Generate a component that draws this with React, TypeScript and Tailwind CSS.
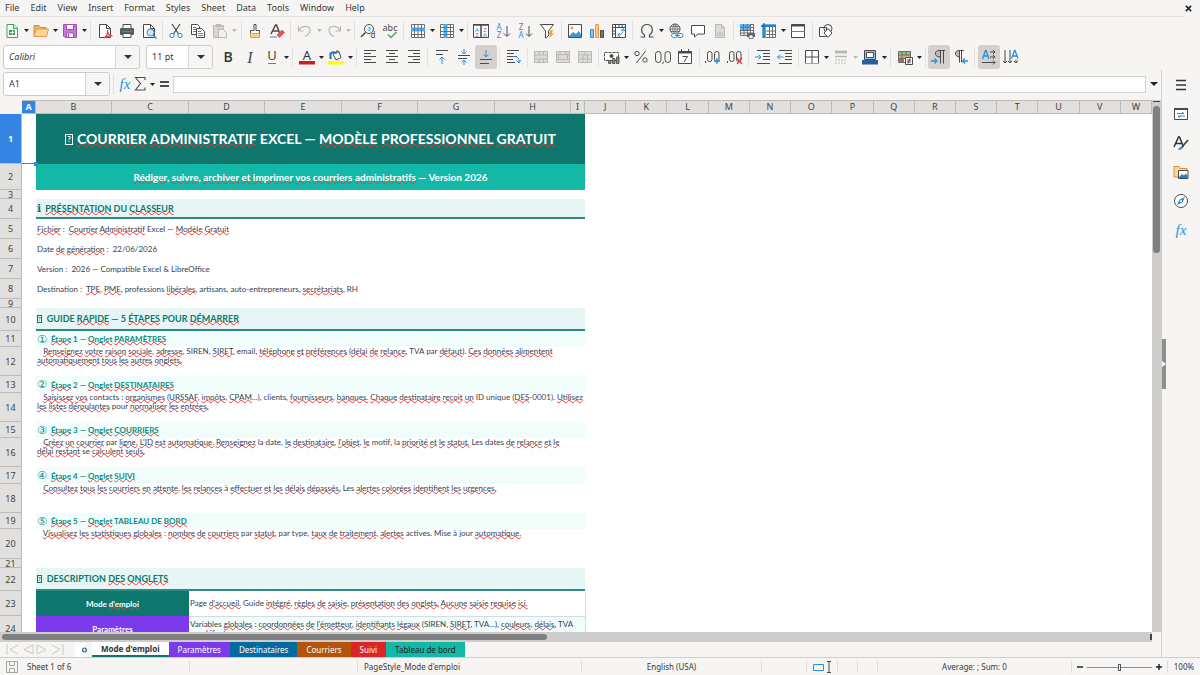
import { Fragment, ReactNode } from 'react';

const INK = '#4a4a48';
const BLUE = '#2a8fd4';
const PURPLE = '#a54fbd';
const ORANGE = '#ee9a3a';
const MUTED = '#b9b8b6';

const lines = (d: string, stroke = INK, width = 1) => (
  <path d={d} stroke={stroke} strokeWidth={width} fill="none" />
);

const letter = (x: number, y: number, text: string, fill = INK, size = 8) => (
  <text x={x} y={y} fontSize={size} fill={fill} fontFamily="Noto Sans" textAnchor="middle">
    {text}
  </text>
);

const icons: Record<string, ReactNode> = {
  New: (
    <>
      <path d="M3 1.500h7l3.500 3.500V14.500H3z" fill="#fff" stroke="#3fa35b" />
      <path d="M9.500 1.500v4h4" fill="#dff3e4" stroke="#3fa35b" />
      <path d="M5 7h6v5H5z" fill="#3fa35b" />
      {lines('M6 9.500h4M8.500 7.500v4', '#fff')}
    </>
  ),
  Open: (
    <>
      <path d="M1 13V2.500h5l1.500 2H13V6" fill="#f3b25c" stroke="#d98e36" />
      <path d="M1 13.500 3 6h12.500l-2 7.500z" fill="#fbd59b" stroke="#e29a45" />
    </>
  ),
  Save: (
    <>
      <path d="M1.500 1.500h13v13H3l-1.500-1.500z" fill="#c07bd4" stroke={PURPLE} />
      <path d="M4.500 1.500h7v5h-7z" fill="#fff" stroke={PURPLE} />
      <path d="M4.500 10h7v4.500h-7z" fill="#fff" stroke={PURPLE} />
      {lines('M6.500 11v3', PURPLE, 1.5)}
    </>
  ),
  'Export as PDF': (
    <>
      <path d="M2.500 1.500h7l4 4V14.500h-11z" fill="#fff" stroke={INK} />
      {lines('M9.500 1.500v4h4')}
      {lines('M7 15c3-2 4-5 3.500-8 0 4 2 5.500 5 6-3-.5-6 .5-8.500 2z', '#dc4550', 1.2)}
    </>
  ),
  Print: (
    <>
      <path d="M4 1.500h8v4H4z" fill="#fff" stroke={INK} />
      <rect x="1" y="5" width="14" height="7" rx="1" fill="#5b5b59" />
      {lines('M3 8.500h10', BLUE, 1.5)}
      <path d="M4 10.500h8v4H4z" fill="#fff" stroke={INK} />
    </>
  ),
  'Print Preview': (
    <>
      <path d="M2.500 1.500h7l4 4V14.500h-11z" fill="#fff" stroke={INK} />
      {lines('M9.500 1.500v4h4')}
      <circle cx="9.500" cy="9.500" r="3.500" fill="#cfe7f8" stroke={BLUE} />
      {lines('m12 12 3.500 3.500', BLUE, 1.5)}
    </>
  ),
  Cut: (
    <>
      {lines('M4 1l6.500 10M12 1 5.500 11', INK, 1.2)}
      <circle cx="4" cy="12.500" r="2.200" fill="none" stroke={BLUE} />
      <circle cx="12" cy="12.500" r="2.200" fill="none" stroke={BLUE} />
    </>
  ),
  Copy: (
    <>
      <path d="M1.500 1.500h6l2 2v8h-8z" fill="#fff" stroke={INK} />
      {lines('M3 4.500h3M3 6.500h4M3 8.500h4', BLUE)}
      <path d="M6.500 5.500h5l3 3v6h-8z" fill="#fff" stroke={INK} />
      {lines('M8 8.500h3M8 10.500h5M8 12.500h5', BLUE)}
    </>
  ),
  Paste: (
    <>
      <path d="M1.500 2.500h10v12h-10z" fill="#d6d5d3" stroke={MUTED} />
      <path d="M4 1h5v3H4z" fill={MUTED} />
      <path d="M6.500 6.500h5l3 3v5h-8z" fill="#f1f0ef" stroke={MUTED} />
    </>
  ),
  'Clone Formatting': (
    <>
      <path d="M7 1.500h2v6h3.500v3h-9v-3H7z" fill="#fff" stroke={INK} />
      <path d="M3.500 10.500h9v4h-9z" fill="#fbd08f" stroke={ORANGE} />
    </>
  ),
  'Clear Direct Formatting': (
    <>
      {lines('M2 11 6.500 2h1L11 11M4 8h6', INK, 1.5)}
      {lines('M1 14h7', BLUE)}
      <path d="m8 12 5-5 2.500 2.500-5 5z" fill="#ef5350" stroke="#d23b3b" strokeWidth=".6" />
    </>
  ),
  Undo: lines('M1.500 3v5h5M2 7.500C5 1.500 13.500 2.500 13 7.500c0 3-3 5-5 6', MUTED, 1.2),
  Redo: lines('M14.500 3v5h-5M14 7.500C11 1.500 2.500 2.500 3 7.500c0 3 3 5 5 6', MUTED, 1.2),
  'Find and Replace': (
    <>
      <circle cx="9" cy="6" r="4.500" fill="#fff" stroke={INK} />
      {lines('M5.500 9.500 1 14', INK, 1.6)}
      {letter(9, 8, 'a', BLUE, 7)}
      {letter(13, 15, 'd', INK, 8)}
    </>
  ),
  Spelling: (
    <>
      {letter(8, 8, 'abc', INK, 9)}
      {lines('m6 11.500 3 3 5.500-5.500', '#43a867', 1.5)}
    </>
  ),
  Row: (
    <>
      <path d="M1.500 1.500h13v13h-13z" fill="#fff" />
      {lines('M1.500 1.500h13v13h-13zM1.500 11.500h13M4.500 1.500v13M8 1.500v13M11.500 1.500v13', '#6d6d6b')}
      <path d="M1 4.500h14v4H1z" fill="#57a9e4" />
      {lines('M4.500 5v3M8 5v3M11.500 5v3', '#2e7fbd')}
    </>
  ),
  Column: (
    <>
      <path d="M1.500 1.500h13v13h-13z" fill="#fff" />
      {lines('M1.500 1.500h13v13h-13zM1.500 4.500h13M1.500 8.500h13M1.500 11.500h13M11.500 1.500v13', '#6d6d6b')}
      <path d="M4.500 1h4v14h-4z" fill="#57a9e4" />
      {lines('M5 4.500h3M5 8.500h3M5 11.500h3', '#2e7fbd')}
    </>
  ),
  Sort: (
    <>
      <path d="M.500 1.500h15v13H.500z" fill="#fff" stroke={INK} />
      {lines('M0 2h16M8 2v13', INK, 1.5)}
      {letter(4, 8.5, 'A', BLUE, 6)}
      {letter(4, 13.5, 'Z', PURPLE, 6)}
      {letter(12, 8.5, 'Z', PURPLE, 6)}
      {letter(12, 13.5, 'A', BLUE, 6)}
    </>
  ),
  'Sort Ascending': (
    <>
      {letter(4, 7, 'A', BLUE, 8)}
      {letter(4, 15, 'Z', PURPLE, 8)}
      {lines('M12 3v10M9 10.500l3 3 3-3')}
    </>
  ),
  'Sort Descending': (
    <>
      {letter(4, 7, 'Z', PURPLE, 8)}
      {letter(4, 15, 'A', BLUE, 8)}
      {lines('M12 3v10M9 10.500l3 3 3-3')}
    </>
  ),
  AutoFilter: (
    <>
      <path d="M1.500 1.500h13L9.500 8v5l-3 2V8z" fill="#fff" stroke={INK} />
      <path d="m12 7-3 4.500h2.500L10 15.500l5-5h-2.500L14 7z" fill={ORANGE} />
    </>
  ),
  Image: (
    <>
      <path d="M1.500 1.500h13v13h-13z" fill="#fff" stroke={INK} />
      <path d="m2 13 4-4 3 2 2.500-3L14 11v3H2z" fill="#3f97d6" />
      <circle cx="5" cy="5" r="1.500" fill={ORANGE} />
    </>
  ),
  Chart: (
    <>
      <path d="M1.500 6.500h3v8h-3z" fill="#8ac4ee" stroke={BLUE} />
      <path d="M6.500 1.500h3v13h-3z" fill="#fbc785" stroke={ORANGE} />
      <path d="M11.500 7.500h3v7h-3z" fill="#777" stroke={INK} />
    </>
  ),
  'Pivot Table': (
    <>
      <path d="M1.500 1.500h13v13h-13z" fill="#fff" stroke={INK} />
      {lines('M1.500 4.500h13M4.500 1.500v13M8 2v2M11 2v2M2 8h2M2 11h2')}
      {lines('M7 12c4 0 5-2 5-6M10 8l2-2.500L14 8M9 10l-2.500 2L9 14', BLUE)}
    </>
  ),
  'Special Character': lines('M1.500 14h4v-2C1 9 2 1.500 8 1.500S15 9 10.500 12v2h4', INK, 1.2),
  Hyperlink: (
    <>
      <circle cx="7" cy="6" r="5" fill="#fff" stroke={INK} />
      {lines('M2 6h10M3 3.500h8M3 8.500h8M7 1v10M7 1C4 4 4 8 7 11M7 1c3 3 3 7 0 10', '#777775')}
      <rect x="3.500" y="10.500" width="6" height="4" rx="2" fill="#fff" stroke={BLUE} />
      <rect x="9" y="10.500" width="6" height="4" rx="2" fill="#fff" stroke={BLUE} />
      {lines('M7 12.500h5', BLUE)}
    </>
  ),
  Comment: <path d="M1.500 2.500h13v8.500H8l-3.500 3v-3h-3z" fill="#fff" stroke={INK} />,
  'Headers and Footers': (
    <path d="M3.500 1.500h6l3 3v10h-9zM9.500 1.500v3h3M5 10h6M5 12h6" fill="#dcdbd9" stroke={MUTED} />
  ),
  'Print Area': (
    <>
      <path d="M1.500 1.500h13v11h-13z" fill="#fff" />
      {lines('M1.500 1.500h13v11h-13zM1.500 4.500h13M1.500 7.500h13M1.500 10h13M5 1.500v11M8.500 1.500v11M11.500 1.500v11', '#6d6d6b')}
      <path d="M1 1h10v6H1z" fill="#63b0e8" />
      {lines('M1 4h10M4.500 1v6M8 1v6', '#2e7fbd')}
      <path d="M8 10h8v4H8z" fill="#4e6f86" />
      <path d="M10 12h4v3.500h-4z" fill="#fff" stroke={INK} strokeWidth=".7" />
    </>
  ),
  Freeze: (
    <>
      <path d="M1.500 1.500h13v13h-13z" fill="#fff" />
      {lines('M1.500 1.500h13v13h-13zM1.500 8h13M1.500 11.500h13M8.500 1.500v13M11.500 1.500v13', '#6d6d6b')}
      <path d="M1 1h4v14H1zM1 1h14v3H1z" fill="#63b0e8" />
      {lines('M3 0v15M0 3h15', '#1b6fae', 1.3)}
    </>
  ),
  'Split Window': (
    <>
      <path d="M1.500 1.500h13v13h-13z" fill="#fff" stroke={INK} />
      {lines('M1 2.500h14', INK, 2)}
      {lines('M1 8.500h14', BLUE)}
    </>
  ),
  'Show Draw Functions': (
    <>
      <path d="M1.500 4.500h7v9h-7z" fill="none" stroke={INK} />
      <circle cx="10" cy="5.500" r="4" fill="none" stroke={INK} />
      <path d="m10 5.500 4 4.500-4 4.500L6 10z" fill="#fff" stroke={INK} />
    </>
  ),
  Italic: (
    <text x="8" y="14" fontSize="16" fontStyle="italic" fontFamily="Liberation Serif" fill={INK} textAnchor="middle">
      I
    </text>
  ),
  Bold: (
    <text x="8" y="13" fontSize="14" fontWeight="600" fontFamily="Open Sans" fill="#333" textAnchor="middle">
      B
    </text>
  ),
  Underline: (
    <>
      {letter(8, 11, 'U', INK, 13)}
      {lines('M4 14.500h8', BLUE)}
    </>
  ),
  'Font Color': (
    <>
      {letter(8, 11, 'A', '#333', 13)}
      <path d="M0 12h16v3.500H0z" fill="#c9211e" />
    </>
  ),
  Highlighting: (
    <>
      <path d="m5 5 6-2.500 2 6L8 11z" fill="#fff" stroke={INK} />
      {lines('M2.500 10V4.500C4 3 5 3 7 3.500', '#1b78b8', 2)}
      {lines('M8 5V2.500c1-1.500 2.500-1 2.500 1')}
      <path d="M0 12h16v3.500H0z" fill="#ffff00" />
    </>
  ),
  'Align Left': lines('M2 1.500h12M2 4.500h7M2 7.500h12M2 10.500h7M2 13.500h12'),
  'Center Horizontally': lines('M2 1.500h12M5 4.500h6M2 7.500h12M5 10.500h6M2 13.500h12'),
  'Align Right': lines('M2 1.500h12M7 4.500h7M2 7.500h12M7 10.500h7M2 13.500h12'),
  'Align Top': (
    <>
      {lines('M2 1.500h12M2 5.500h7')}
      {lines('M8 15V8M5.500 10.500 8 8l2.500 2.500', BLUE)}
    </>
  ),
  'Center Vertically': (
    <>
      {lines('M2 6.500h12M2 9.500h9')}
      {lines('M8 0v5M5.500 2.500 8 5l2.500-2.500M8 16v-5M5.500 13.500 8 11l2.500 2.500', BLUE)}
    </>
  ),
  'Align Bottom': (
    <>
      {lines('M2 10.500h12M2 14.500h9')}
      {lines('M8 1v7M5.500 5.500 8 8l2.500-2.500', BLUE)}
    </>
  ),
  'Wrap Text': (
    <>
      {lines('M2 1.500h12M2 4.500h7M2 7.500h10M2 10.500h6M2 13.500h8')}
      {lines('M8 7.500c5 0 6 1 6 6M11.500 11.500l2.500 2.500 1.500-3', BLUE)}
    </>
  ),
  'Merge and Center Cells': (
    <path d="M1.500 2.500h13v11h-13zM1.500 6h13v4h-13zM6 2.500V6M10.500 2.500V6M6 10v3.500M10.500 10v3.500" fill="#dddcda" stroke={MUTED} />
  ),
  'Merge Cells': (
    <path d="M1.500 2.500h13v11h-13zM1.500 5.500h13M1.500 10.500h13M5 2.500v3M11 2.500v3M3.500 5.500h9v5h-9z" fill="#dddcda" stroke={MUTED} />
  ),
  'Unmerge Cells': (
    <path d="M1.500 2.500h13v11h-13zM1.500 6h13M6 6v7.500M10.500 6v7.500M1.500 10h13M8 2.500V6" fill="#dddcda" stroke={MUTED} />
  ),
  'Format as Currency': (
    <>
      <path d="M.500 3.500h14v8H.500z" fill="#fff" stroke={INK} strokeDasharray="3 1" />
      <circle cx="7.500" cy="7" r="2" fill={INK} />
      <path d="M4.500 11.500h2.500v3H4.500zM8.500 9.500H11v5H8.500zM12.500 8H15v6.500h-2.500z" fill="#8b8b89" stroke={INK} strokeWidth=".8" />
    </>
  ),
  'Format as Percent': (
    <>
      <circle cx="4" cy="4.500" r="2.200" fill="none" stroke={INK} />
      <circle cx="12" cy="11" r="2.200" fill="none" stroke={INK} />
      {lines('M12.500 2 3.500 14')}
    </>
  ),
  'Format as Number': (
    <>
      <rect x=".500" y="2.500" width="5.500" height="11" rx="2.700" fill="none" stroke={INK} />
      <rect x="10" y="2.500" width="5.500" height="11" rx="2.700" fill="none" stroke={INK} />
      {lines('M8.500 12.500 7.500 15')}
    </>
  ),
  'Format as Date': (
    <>
      <path d="M1.500 2.500h13v12h-13z" fill="#fff" stroke={INK} />
      {lines('M1.500 3.500h13', INK, 2)}
      {lines('M4.500 0v4M11.500 0v4M5.500 7.500h5L7 13')}
    </>
  ),
  'Add Decimal Place': (
    <>
      <rect x="2.500" y="2.500" width="4.500" height="10" rx="2.200" fill="none" stroke={INK} />
      <rect x="9.500" y="2.500" width="4.500" height="10" rx="2.200" fill="none" stroke={INK} />
      {lines('M.500 12v2')}
      {lines('M12 9v6M9 12h6', BLUE, 1.3)}
    </>
  ),
  'Delete Decimal Place': (
    <>
      <rect x="2.500" y="2.500" width="4.500" height="10" rx="2.200" fill="none" stroke={INK} />
      <rect x="9.500" y="2.500" width="4.500" height="10" rx="2.200" fill="none" stroke={INK} />
      {lines('M.500 12v2')}
      {lines('m10 9 5 6M15 9l-5 6', '#e0403f', 1.3)}
    </>
  ),
  'Increase Indent': (
    <>
      {lines('M2 1.500h13M8 4.500h7M8 7.500h7M8 10.500h7M2 14.500h13')}
      {lines('M0 8h6M3.500 5.500 6 8l-2.500 2.500', BLUE)}
    </>
  ),
  'Decrease Indent': (
    <>
      {lines('M2 1.500h13M8 4.500h7M8 7.500h7M8 10.500h7M2 14.500h13')}
      {lines('M6.500 8H.500M3 5.500.500 8 3 10.500', BLUE)}
    </>
  ),
  Borders: (
    <>
      <path d="M1.500 1.500h13v13h-13z" fill="#fff" />
      {lines('M14.500 1.500h-13v13M8 1.500v13M1.500 8h13M14.500 1.500v13')}
      {lines('M1.500 14.500h13', ORANGE)}
    </>
  ),
  'Border Style': (
    <>
      {lines('M2 3h12', MUTED, 3)}
      {lines('M2 7.500h12', MUTED, 1.5)}
      <path d="M2 11h12M2 14h12" stroke={MUTED} strokeDasharray="2 1" />
    </>
  ),
  'Border Color': (
    <>
      <path d="M2.500 1.500h11v9h-11z" fill="#8dc3ea" stroke={INK} />
      <path d="M4.500 3.500h7v5h-7z" fill="#fff" stroke={INK} />
      <path d="M0 11h16v4.500H0z" fill="#2a6099" />
    </>
  ),
  'Conditional Formatting': (
    <>
      <path d="M1.500 2.500h12v11h-12z" fill="#fff" />
      <path d="M2 3h11v3H2z" fill="#7ecb8c" />
      <path d="M2 6h11v3H2z" fill="#f3a06a" />
      <path d="M2 9h5v4H2z" fill="#e5565a" />
      {lines('M1.500 2.500h12v11h-12zM1.500 6h12M1.500 9.500h12M5 2.500v11M9 2.500v4', '#6d6d6b')}
      <path d="M8.500 8.500h7v7h-7z" fill="#fff" stroke={INK} />
      {lines('M10 11h4M10 13h4M13 9.500l-2 5')}
    </>
  ),
  'Left-To-Right': (
    <>
      <path d="M9 1.500C3 1.500 3 8 9 8z" fill="#bdbbb8" />
      {lines('M14 1.500H8C3 1.500 3 8 9 8M9.500 1.500v13M12.500 1.500v13')}
      {lines('M0 12h6M3.500 9.500 6 12l-2.500 2.500', BLUE, 1.3)}
    </>
  ),
  'Right-To-Left': (
    <>
      <path d="M7 1.500C1 1.500 1 8 7 8z" fill="#bdbbb8" />
      {lines('M11 1.500H6C1 1.500 1 8 7 8M6.500 1.500v12M8.500 1.500v12')}
      {lines('M15 12H9.500M12 9.500 9.500 12l2.500 2.500', BLUE, 1.3)}
    </>
  ),
  'Text direction from left to right': (
    <>
      {lines('M1.500 10 4.500 1.500h.500L8 10M2.500 7h5', BLUE, 1.3)}
      {lines('M9 3h5M12 1l2 2-2 2M9 8h5M12 6l2 2-2 2M1 13.500h13M12 11.500l2 2-2 2')}
    </>
  ),
  'Text direction from top to bottom': (
    <>
      {lines('M8.500 9.500 11.500 1.500h.500L15 9.500M9.500 7h5', BLUE, 1.3)}
      {lines('M2 1v13M0 12l2 2 2-2M7 1v13M5 12l2 2 2-2M13 10.500v3.500M11 12l2 2 2-2')}
    </>
  ),
  'Function Wizard': (
    <text x="8" y="13" fontSize="15" fontStyle="italic" fontFamily="Liberation Serif" fill={BLUE} textAnchor="middle">
      fx
    </text>
  ),
  'Select Function': lines('M12 4V1.500H2.500l5 6-5 6.500H12v-2.500', INK, 1.1),
  Formula: lines('M5 6h9M5 10h9', INK, 1.8),
  Settings: lines('M3 3.500h10M3 8h10M3 12.500h10', '#333', 1.6),
  Properties: (
    <>
      <path d="M1.500 2.500h13v11h-13z" fill="#fff" stroke={INK} />
      {lines('M1 3h14', INK, 2)}
      {lines('M4 7.500h7l-2-1.500M12 10H5l2 1.500', BLUE)}
    </>
  ),
  Styles: (
    <>
      {lines('M1 12 5.500 2h1L10.500 12M3 8.500h6', '#333', 1.5)}
      {lines('m15 5-6 7', INK, 1.8)}
      <path d="M5 15c1-3 3-4 5-3 0 2-2 3-5 3z" fill={BLUE} />
    </>
  ),
  Gallery: (
    <>
      <path d="M1 13V2.500h5l1 2h7V13z" fill="#fbd59b" stroke="#e08e3c" />
      <path d="M5.500 6.500h9.500v8H5.500z" fill="#fff" stroke={INK} />
      <path d="m6 13 3-3 2 1.500 1.500-2 2 2V14H6z" fill="#2a83c6" />
    </>
  ),
  Navigator: (
    <>
      <circle cx="8" cy="8" r="6.500" fill="#fff" stroke={INK} />
      <path d="M12 4 9.500 9.500 4 12l2.500-5.500z" fill={BLUE} />
      <circle cx="8" cy="8" r="1" fill="#fff" />
    </>
  ),
};

function Icon({ name }: { name: string }) {
  return (
    <svg viewBox="0 0 16 16" className="size-4 shrink-0 overflow-visible" aria-hidden="true">
      {icons[name]}
    </svg>
  );
}

function Caret({ muted }: { muted?: boolean }) {
  return (
    <svg viewBox="0 0 5 3" className="h-[3px] w-[5px]" aria-hidden="true">
      <path d="M0 0h5L2.500 3z" fill={muted ? MUTED : '#222'} />
    </svg>
  );
}

// "+" after a name adds a drop-down arrow, "*" marks a pressed toggle, "-" a disabled one
const standardBar = [
  ['New+', 'Open+', 'Save+'],
  ['Export as PDF', 'Print', 'Print Preview'],
  ['Cut', 'Copy', 'Paste+-'],
  ['Clone Formatting', 'Clear Direct Formatting'],
  ['Undo+-', 'Redo+-'],
  ['Find and Replace', 'Spelling'],
  ['Row+', 'Column+'],
  ['Sort', 'Sort Ascending', 'Sort Descending', 'AutoFilter'],
  ['Image', 'Chart', 'Pivot Table'],
  ['Special Character+', 'Hyperlink', 'Comment', 'Headers and Footers'],
  ['Print Area', 'Freeze+', 'Split Window'],
  ['Show Draw Functions'],
];

const formattingBar = [
  ['Bold', 'Italic', 'Underline+'],
  ['Font Color+', 'Highlighting+'],
  ['Align Left', 'Center Horizontally', 'Align Right'],
  ['Align Top', 'Center Vertically', 'Align Bottom*'],
  ['Wrap Text'],
  ['Merge and Center Cells', 'Merge Cells', 'Unmerge Cells'],
  ['Format as Currency+', 'Format as Percent', 'Format as Number', 'Format as Date'],
  ['Add Decimal Place', 'Delete Decimal Place'],
  ['Increase Indent', 'Decrease Indent'],
  ['Borders+', 'Border Style+-', 'Border Color+'],
  ['Conditional Formatting+'],
  ['Left-To-Right*', 'Right-To-Left'],
  ['Text direction from left to right*', 'Text direction from top to bottom'],
];

function ToolGroups({ groups }: { groups: string[][] }) {
  return (
    <>
      {groups.map((group, i) => (
        <Fragment key={i}>
          {i > 0 && <div className="h-5 w-px bg-[#e4e3e1]" />}
          <div className="flex">
            {group.map((item) => {
              const name = item.replace(/[+*-]+$/, '');
              const flags = item.slice(name.length);
              return (
                <div key={name} className="flex">
                  <button
                    aria-label={name}
                    className={`flex h-6 w-[22px] items-center justify-center rounded-[3px] ${
                      flags.includes('*') ? 'bg-[#d3d0cd]' : ''
                    }`}
                  >
                    <Icon name={name} />
                  </button>
                  {flags.includes('+') && (
                    <button aria-label={`${name} options`} className="flex w-[7px] items-center justify-center">
                      <Caret muted={flags.includes('-')} />
                    </button>
                  )}
                </div>
              );
            })}
          </div>
        </Fragment>
      ))}
    </>
  );
}

function Combo({ label, value, width, italic }: { label: string; value: string; width: string; italic?: boolean }) {
  return (
    <div className={`flex h-6 overflow-hidden rounded-[3px] border border-[#cdcbc8] bg-white ${width}`}>
      <input
        aria-label={label}
        defaultValue={value}
        className={`min-w-0 flex-1 px-[5px] outline-none ${italic ? 'italic' : ''}`}
      />
      <button
        aria-label={`${label} list`}
        className="flex w-6 items-center justify-center border-l border-[#d8d6d4] bg-[#f6f5f4]"
      >
        <svg viewBox="0 0 8 4" className="h-1 w-2" aria-hidden="true">
          <path d="M0 0h8L4 4z" fill="#333" />
        </svg>
      </button>
    </div>
  );
}

// Words between tildes get the spell checker's red wave
function Spell({ text }: { text: string }) {
  return (
    <>
      {text.split('~').map((part, i) =>
        i % 2 ? (
          <span
            key={i}
            className="underline decoration-[#e03c3c] decoration-wavy decoration-1 -underline-offset-1 [text-decoration-skip-ink:none]"
          >
            {part}
          </span>
        ) : (
          part
        )
      )}
    </>
  );
}

function Missing({ large }: { large?: boolean }) {
  return (
    <span
      className={`inline-block border border-current font-bold ${
        large ? 'mr-1 px-px text-[8px] leading-[9px]' : 'mr-[5px] text-[6px] leading-[6px]'
      }`}
    >
      ?
    </span>
  );
}

type Row = {
  n: number;
  h: string;
  kind?: 'title' | 'subtitle' | 'section' | 'step' | 'text' | 'info';
  mark?: string;
  text?: string[];
  tab?: { name: string; color: string; bg: string };
};

const rows: Row[] = [
  {
    n: 1,
    h: 'h-[50px]',
    kind: 'title',
    mark: '?',
    text: ['~COURRIER~ ~ADMINISTRATIF~ EXCEL — ~MODÈLE~ ~PROFESSIONNEL~ ~GRATUIT~'],
  },
  {
    n: 2,
    h: 'h-[26px]',
    kind: 'subtitle',
    text: ['~Rédiger~, ~suivre~, ~archiver~ ~et~ ~imprimer~ ~vos~ ~courriers~ ~administratifs~ — Version 2026'],
  },
  { n: 3, h: 'h-[9px]' },
  { n: 4, h: 'h-5', kind: 'section', mark: 'ℹ', text: ['~PRÉSENTATION~ DU ~CLASSEUR~'] },
  { n: 5, h: 'h-5', kind: 'info', text: ['~Fichier~ :  ~Courrier~ ~Administratif~ Excel — ~Modèle~ ~Gratuit~'] },
  { n: 6, h: 'h-5', kind: 'info', text: ['Date ~de~ ~génération~ :  22/06/2026'] },
  { n: 7, h: 'h-5', kind: 'info', text: ['Version :  2026 — Compatible Excel & LibreOffice'] },
  {
    n: 8,
    h: 'h-5',
    kind: 'info',
    text: ['Destination :  ~TPE~, ~PME~, professions ~libérales~, artisans, auto-entrepreneurs, ~secrétariats~, RH'],
  },
  { n: 9, h: 'h-[9px]' },
  { n: 10, h: 'h-[23px]', kind: 'section', mark: '?', text: ['GUIDE ~RAPIDE~ — 5 ~ÉTAPES~ POUR ~DÉMARRER~'] },
  { n: 11, h: 'h-4', kind: 'step', mark: '①', text: ['~Étape~ 1 — ~Onglet~ ~PARAMÈTRES~'] },
  {
    n: 12,
    h: 'h-[29px]',
    kind: 'text',
    text: [
      '   ~Renseignez~ ~votre~ ~raison~ ~sociale~, ~adresse~, SIREN, ~SIRET~, email, ~téléphone~ ~et~ ~préférences~ (~délai~ ~de~ ~relance~, TVA par ~défaut~). ~Ces~ ~données~ ~alimentent~',
      '~automatiquement~ ~tous~ ~les~ ~autres~ ~onglets.~',
    ],
  },
  { n: 13, h: 'h-[17px]', kind: 'step', mark: '②', text: ['~Étape~ 2 — ~Onglet~ ~DESTINATAIRES~'] },
  {
    n: 14,
    h: 'h-[29px]',
    kind: 'text',
    text: [
      '   ~Saisissez~ ~vos~ contacts : ~organismes~ (~URSSAF~, ~impôts~, ~CPAM~...), clients, ~fournisseurs~, ~banques.~ ~Chaque~ ~destinataire~ ~reçoit~ ~un~ ID unique (~DES~-0001). ~Utilisez~',
      '~les~ ~listes~ ~déroulantes~ pour ~normaliser~ ~les~ ~entrées.~',
    ],
  },
  { n: 15, h: 'h-4', kind: 'step', mark: '③', text: ['~Étape~ 3 — ~Onglet~ ~COURRIERS~'] },
  {
    n: 16,
    h: 'h-[29px]',
    kind: 'text',
    text: [
      "   ~Créez~ ~un~ ~courrier~ par ~ligne.~ ~L'ID~ ~est~ ~automatique.~ ~Renseignez~ la date, ~le~ ~destinataire~, ~l'objet~, ~le~ motif, la ~priorité~ ~et~ ~le~ ~statut.~ Les dates ~de~ ~relance~ ~et~ ~le~",
      '~délai~ ~restant~ se ~calculent~ ~seuls.~',
    ],
  },
  { n: 17, h: 'h-[17px]', kind: 'step', mark: '④', text: ['~Étape~ 4 — ~Onglet~ ~SUIVI~'] },
  {
    n: 18,
    h: 'h-[29px]',
    kind: 'text',
    text: [
      '   ~Consultez~ ~tous~ ~les~ ~courriers~ ~en~ ~attente~, ~les~ ~relances~ à ~effectuer~ ~et~ ~les~ ~délais~ ~dépassés.~ Les ~alertes~ ~colorées~ ~identifient~ ~les~ ~urgences.~',
    ],
  },
  { n: 19, h: 'h-4', kind: 'step', mark: '⑤', text: ['~Étape~ 5 — ~Onglet~ TABLEAU DE ~BORD~'] },
  {
    n: 20,
    h: 'h-[30px]',
    kind: 'text',
    text: [
      '   ~Visualisez~ ~les~ ~statistiques~ ~globales~ : ~nombre~ ~de~ ~courriers~ par ~statut~, par type, ~taux~ ~de~ ~traitement~, ~alertes~ actives. Mise à jour ~automatique.~',
    ],
  },
  { n: 21, h: 'h-[9px]' },
  { n: 22, h: 'h-[23px]', kind: 'section', mark: '?', text: ['DESCRIPTION ~DES~ ~ONGLETS~'] },
  {
    n: 23,
    h: 'h-[25px]',
    tab: { name: "Mode ~d'emploi~", color: 'bg-[#0f766e]', bg: 'bg-white' },
    text: ["Page ~d'accueil.~ Guide ~intégré~, ~règles~ ~de~ ~saisie~, ~présentation~ ~des~ ~onglets.~ ~Aucune~ ~saisie~ ~requise~ ~ici.~"],
  },
  {
    n: 24,
    h: 'h-[26px]',
    tab: { name: '~Paramètres~', color: 'bg-[#7c3aed]', bg: 'bg-[#f0fdfa]' },
    text: [
      "Variables ~globales~ : ~coordonnées~ ~de~ ~l'émetteur~, ~identifiants~ ~légaux~ (SIREN, ~SIRET~, TVA...), ~couleurs~, ~délais~, TVA",
      'par ~défaut~.',
    ],
  },
];

const cellStyles = {
  title: 'items-center justify-center bg-[#0f766e] text-sm font-bold text-white',
  subtitle: 'items-center justify-center bg-[#14b8a6] text-[10px] font-bold text-white',
  section: 'items-center border-b-2 border-[#2b8a82] bg-[#e6f6f4] px-px text-[9px] font-bold text-[#0f766e]',
  step: 'items-center bg-[#f0fdfa] px-px text-[8px] font-bold text-[#0f8a7e]',
  text: 'items-start px-px text-[8px] text-[#374151]',
  info: 'items-center px-px text-[8px] text-[#374151]',
};

const leadColumns = 'ABCDEFGHI'.split('');
const freeColumns = 'JKLMNOPQRSTUVW'.split('');

function RowContent({ row }: { row: Row }) {
  if (row.tab) {
    return (
      <>
        <td colSpan={2} className={`p-0 text-center text-[8px] font-bold text-white ${row.tab.color}`}>
          <Spell text={row.tab.name} />
        </td>
        <td colSpan={6} className={`border-r border-b border-[#d4dbe0] p-0 pl-px text-[8px] text-[#374151] ${row.tab.bg}`}>
          {row.text?.map((line) => (
            <div key={line} className="leading-[9px] whitespace-pre">
              <Spell text={line} />
            </div>
          ))}
        </td>
      </>
    );
  }
  return (
    <td colSpan={8} className="p-0">
      {row.kind && (
        <div className={`flex ${row.h} ${cellStyles[row.kind]}`}>
          {row.mark === '?' && <Missing large={row.kind === 'title'} />}
          {row.mark && row.mark !== '?' && (
            <span className="mr-1 font-['DejaVu_Sans',sans-serif] text-[11px] leading-none font-normal">{row.mark}</span>
          )}
          <div>
            {row.text?.map((line) => (
              <div key={line} className={`whitespace-pre ${row.kind === 'text' ? 'leading-[9px]' : ''}`}>
                <Spell text={line} />
              </div>
            ))}
          </div>
        </div>
      )}
    </td>
  );
}

function Sheet() {
  return (
    <table className="w-full table-fixed border-collapse font-[Lato,Carlito,sans-serif] leading-none">
      <colgroup>
        <col className="w-[22px]" />
        <col className="w-[14px]" />
        <col className="w-[76px]" />
        <col className="w-[77px]" />
        <col className="w-[76px]" />
        <col className="w-[77px]" />
        <col className="w-[76px]" />
        <col className="w-[77px]" />
        <col className="w-[76px]" />
        <col className="w-[14px]" />
        {freeColumns.map((c) => (
          <col key={c} className={c === 'W' ? 'w-[31px]' : ''} />
        ))}
      </colgroup>
      <thead className="font-['Noto_Sans',sans-serif] text-[9px] text-[#444]">
        <tr>
          <td className="bg-[#f6f5f4] p-0" />
          {[...leadColumns, ...freeColumns].map((c) => (
            <th key={c} scope="col" className="p-0 font-normal">
              <div
                className={`h-[14px] border-t border-r border-b border-[#bdbcba] leading-3 ${
                  c === 'A' ? 'bg-[#3584e4] font-bold text-white' : 'bg-[#e1e0de]'
                }`}
              >
                {c}
              </div>
            </th>
          ))}
        </tr>
      </thead>
      <tbody>
        {rows.map((row) => (
          <tr key={row.n}>
            <th scope="row" className="p-0">
              <div
                className={`flex items-center justify-center border-r border-b border-[#bdbcba] font-['Noto_Sans',sans-serif] text-[9px] ${row.h} ${
                  row.n === 1 ? 'bg-[#3584e4] font-bold text-white' : 'bg-[#e1e0de] font-normal text-[#444]'
                }`}
              >
                {row.n}
              </div>
            </th>
            <td className="relative p-0">
              {row.n === 1 && (
                <>
                  <div className={`border-b border-[#3584e4] ${row.h}`} />
                  <span className="absolute -right-0.5 -bottom-0.5 size-1 bg-[#3584e4]" />
                </>
              )}
            </td>
            <RowContent row={row} />
            <td colSpan={freeColumns.length} />
          </tr>
        ))}
      </tbody>
    </table>
  );
}

const menus = ['File', 'Edit', 'View', 'Insert', 'Format', 'Styles', 'Sheet', 'Data', 'Tools', 'Window', 'Help'];

const tabs = [
  { name: "Mode d'emploi", style: 'bg-white font-bold border-b-2 border-[#0f766e] text-[#333]' },
  { name: 'Paramètres', style: 'bg-[#7c3aed] text-white' },
  { name: 'Destinataires', style: 'bg-[#0369a1] text-white' },
  { name: 'Courriers', style: 'bg-[#b45309] text-white' },
  { name: 'Suivi', style: 'bg-[#dc2626] text-white' },
  { name: 'Tableau de bord', style: 'bg-[#14b8a6] text-[#222]' },
];

function SheetTabs() {
  return (
    <div className="flex h-[15px] shrink-0 items-stretch text-[8px]">
      <div className="flex w-[74px] items-center pl-[5px]">
        {['M2 1v11M13 2 5 6.500l8 4.500', 'M13 2 4 6.500l9 4.500z', 'M2 2l9 4.500L2 11z', 'M13 1v11M2 2l8 4.500L2 11'].map((d, i) => (
          <button key={d} aria-label={['First sheet', 'Previous sheet', 'Next sheet', 'Last sheet'][i]}>
            <svg viewBox="0 0 15 13" className="h-[13px] w-[15px]" aria-hidden="true">
              {lines(d, '#c9c8c6')}
            </svg>
          </button>
        ))}
      </div>
      <button aria-label="Add sheet" className="flex w-[18px] items-center">
        <svg viewBox="0 0 14 14" className="h-[14px] w-[14px]" aria-hidden="true">
          <path d="M1 0h10v14H1z" fill="#fff" />
          <circle cx="10.500" cy="7" r="2.500" fill="#2f5fa8" />
          {lines('M10.500 5.500v3M9 7h3', '#fff')}
        </svg>
      </button>
      {tabs.map((tab) => (
        <button key={tab.name} className={`px-[9px] leading-[13px] ${tab.style}`}>
          {tab.name}
        </button>
      ))}
    </div>
  );
}

function StatusBar() {
  const cell = 'flex h-3 items-center justify-center border-l border-[#dedddb]';
  return (
    <footer className="flex h-[18px] shrink-0 items-center border-t border-[#cfcecb] pt-px text-[8px]">
      <svg viewBox="0 0 16 16" className="ml-1 size-4" aria-hidden="true">
        {lines('M2.500 2.500h11v11h-11zM5.500 2.500v4h5v-4M5.500 13.500v-4h5v4', '#a5a4a2')}
      </svg>
      <div className="w-[169px] pl-[7px]">Sheet 1 of 6</div>
      <div className={`w-[168px] ${cell}`} />
      <div className="flex h-3 flex-1 items-center border-l border-[#dedddb] pl-[6px]">PageStyle_Mode d'emploi</div>
      <div className={`w-[180px] ${cell}`}>English (USA)</div>
      <div className={`w-[45px] ${cell}`} />
      <div className={`w-[31px] ${cell}`}>
        <svg viewBox="0 0 20 12" className="h-3 w-5" aria-hidden="true">
          {lines('M1.500 3.500h10v6h-10z', BLUE)}
          {lines('M15 .500h4M15 11.500h4M17 .500v11')}
        </svg>
      </div>
      <div className={`w-5 ${cell}`} />
      <div className={`w-5 ${cell}`} />
      <div className={`w-[194px] ${cell}`}>Average: ; Sum: 0</div>
      <div className={`w-[96px] gap-[3px] ${cell}`}>
        <button aria-label="Zoom out">
          <svg viewBox="0 0 8 8" className="size-2" aria-hidden="true">
            {lines('M1 4h6', '#222', 1.5)}
          </svg>
        </button>
        <input
          type="range"
          aria-label="Zoom"
          defaultValue={50}
          className="h-px w-[65px] appearance-none bg-[#8f8e8c] [&::-webkit-slider-thumb]:h-[7px] [&::-webkit-slider-thumb]:w-[3px] [&::-webkit-slider-thumb]:appearance-none [&::-webkit-slider-thumb]:border [&::-webkit-slider-thumb]:border-[#555] [&::-webkit-slider-thumb]:bg-white"
        />
        <button aria-label="Zoom in">
          <svg viewBox="0 0 8 8" className="size-2" aria-hidden="true">
            {lines('M1 4h6M4 1v6', '#222', 1.5)}
          </svg>
        </button>
      </div>
      <div className={`w-[33px] ${cell}`}>100%</div>
    </footer>
  );
}

export default function App() {
  return (
    <div className="flex h-screen flex-col overflow-hidden bg-[#f6f5f4] font-['Noto_Sans',sans-serif] text-[9px] text-[#3a3a38]">
      <header>
        <nav className="mr-4 flex h-[17px] items-center border-b border-[#e4e3e1] pl-[5px]">
          <div className="flex gap-[11px]">
            {menus.map((menu) => (
              <button key={menu}>{menu}</button>
            ))}
          </div>
          <button aria-label="Close document" className="-mr-2 ml-auto">
            <svg viewBox="0 0 8 8" className="size-[7px]" aria-hidden="true">
              {lines('m1 1 6 6M7 1 1 7', '#222', 1.8)}
            </svg>
          </button>
        </nav>
        <div className="flex h-[27px] w-[837px] items-center justify-between pl-px">
          <ToolGroups groups={standardBar} />
        </div>
        <div className="flex h-[26px] items-center gap-1 pl-[3px]">
          <Combo label="Font Name" value="Calibri" width="w-[137px]" italic />
          <div className="ml-[2px]">
            <Combo label="Font Size" value="11 pt" width="w-[67px]" />
          </div>
          <div className="flex w-[805px] items-center justify-between">
            <ToolGroups groups={formattingBar} />
          </div>
        </div>
      </header>

      <div className="flex min-h-0 flex-1">
        <main className="flex min-w-0 flex-1 flex-col">
          <div className="flex h-[30px] shrink-0 items-center pb-[2px] pl-[3px]">
            <Combo label="Name Box" value="A1" width="w-[107px]" />
            <div className="mx-[3px] h-5 w-px bg-[#e4e3e1]" />
            <button aria-label="Function Wizard">
              <Icon name="Function Wizard" />
            </button>
            <button aria-label="Select Function">
              <Icon name="Select Function" />
            </button>
            <button aria-label="Select Function options" className="flex w-[6px] justify-center">
              <Caret />
            </button>
            <button aria-label="Formula" className="mr-[2px]">
              <Icon name="Formula" />
            </button>
            <input aria-label="Input line" className="h-[17px] min-w-0 flex-1 border border-[#d5d3d0] bg-white px-1" />
            <button aria-label="Expand Formula Bar" className="flex w-[15px] justify-center">
              <svg viewBox="0 0 8 4" className="h-1 w-2" aria-hidden="true">
                <path d="M0 0h8L4 4z" fill="#222" />
              </svg>
            </button>
          </div>
          <div className="flex min-h-0 flex-1">
            <div className="min-w-0 flex-1 overflow-hidden bg-white">
              <Sheet />
            </div>
            <div className="flex w-[9px] flex-col gap-1 bg-[#cecdcc] px-px pt-px">
              <div className="h-px bg-[#444]" />
              <div className="h-[147px] rounded-full bg-[#808080]" />
            </div>
          </div>
          <div className="mr-[9px] flex h-[10px] shrink-0 items-center justify-between bg-[#cecdcc] pl-[2px]">
            <div className="h-[6px] w-[545px] rounded-full bg-[#808080]" />
            <div className="h-[6px] w-[2px] bg-[#444]" />
          </div>
          <SheetTabs />
        </main>
        <aside className="relative flex w-[39px] flex-col items-center gap-[13px] border-l border-[#d0cfcd] pt-[7px]">
          {['Settings', 'Properties', 'Styles', 'Gallery', 'Navigator', 'Function Wizard'].map((name) => (
            <button key={name} aria-label={name}>
              <Icon name={name} />
            </button>
          ))}
          <button
            aria-label="Hide sidebar"
            className="absolute top-[269px] left-0 flex h-[50px] w-1 items-center bg-[#8e8e8d]"
          >
            <svg viewBox="0 0 4 6" className="h-[6px] w-1" aria-hidden="true">
              <path d="M0 0v6l4-3z" fill="#fff" />
            </svg>
          </button>
        </aside>
      </div>

      <StatusBar />
    </div>
  );
}
